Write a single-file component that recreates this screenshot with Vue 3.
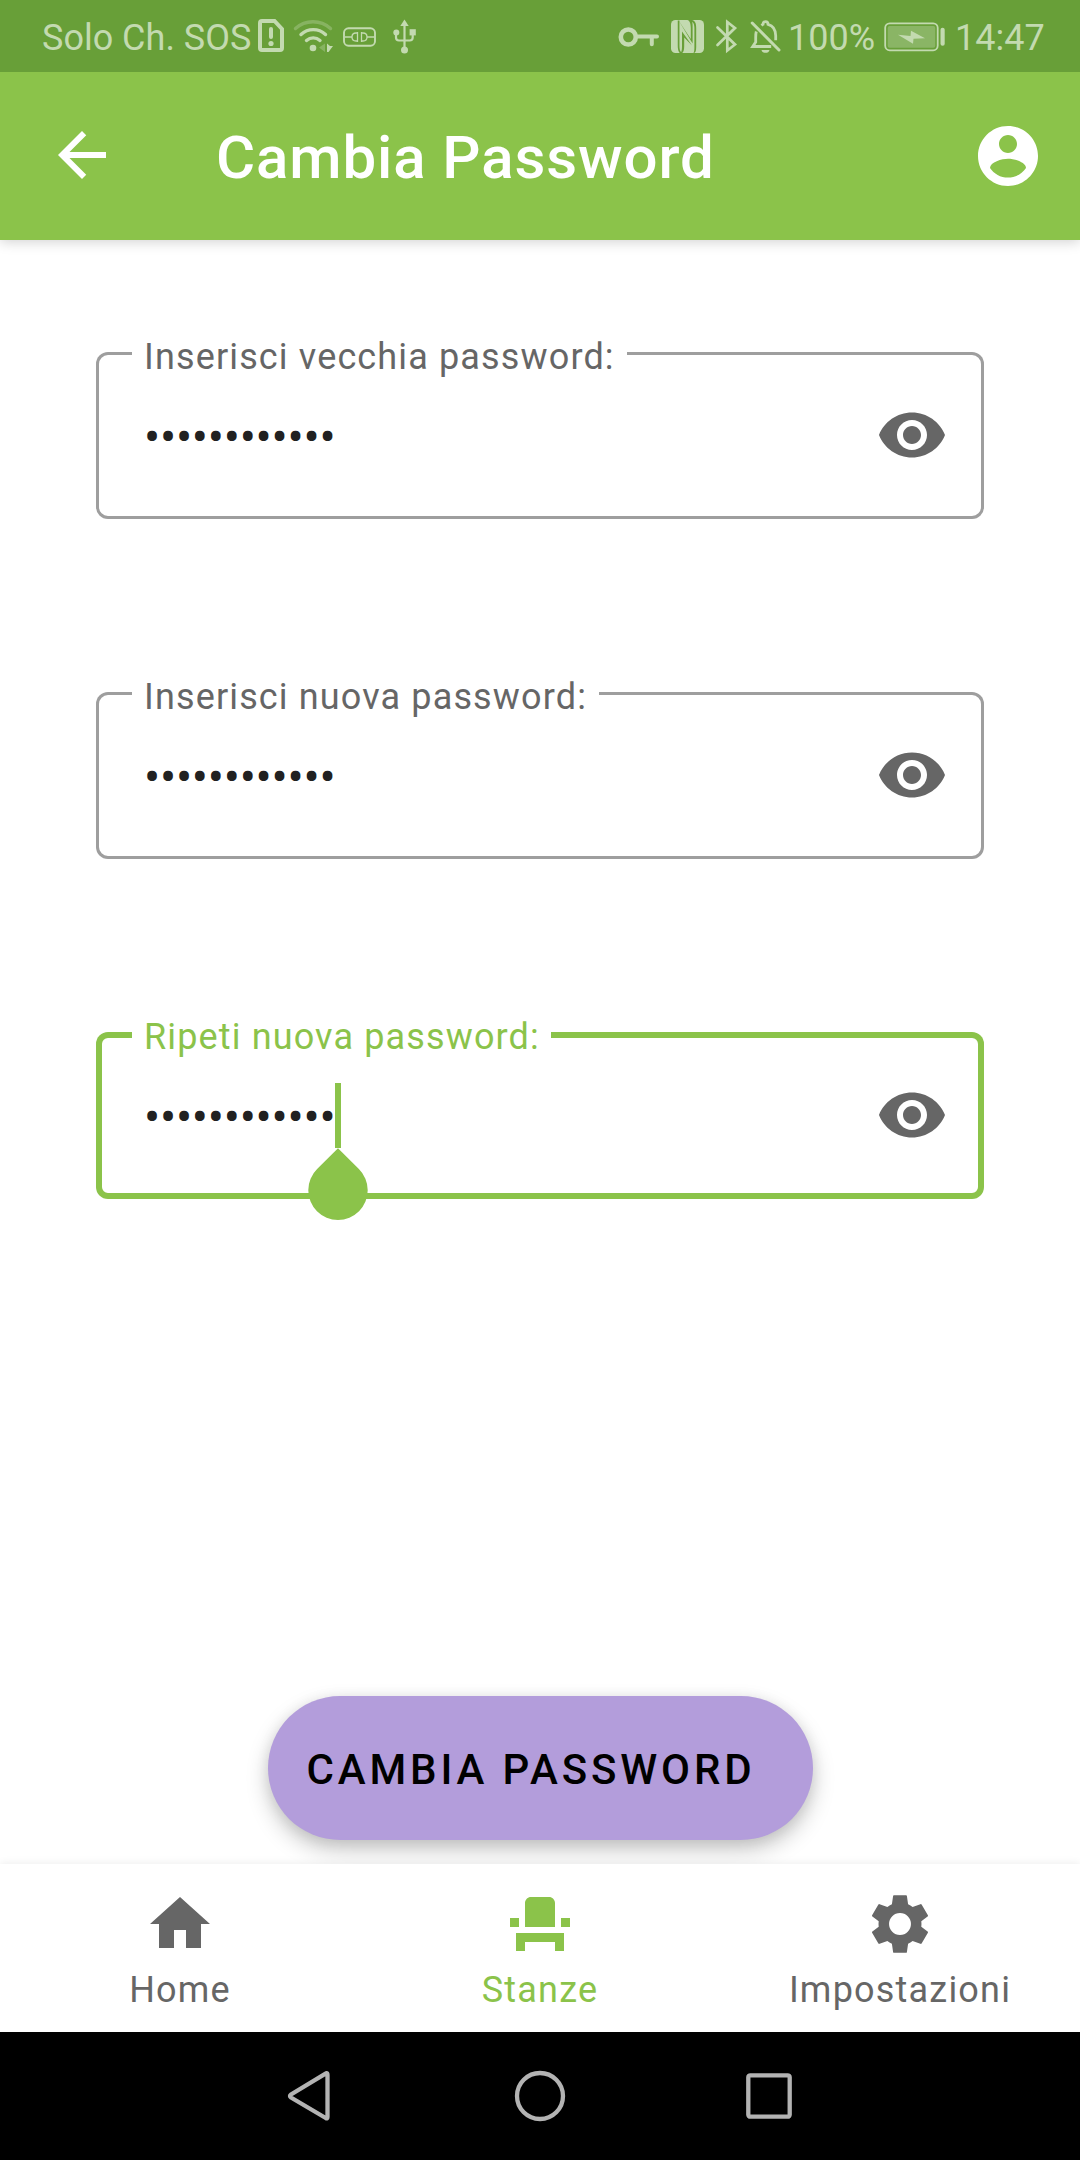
<script setup>
const fields = [
  { id: 'old', label: 'Inserisci vecchia password:', notch: 495, focused: false },
  { id: 'new', label: 'Inserisci nuova password:', notch: 467, focused: false },
  { id: 'repeat', label: 'Ripeti nuova password:', notch: 419, focused: true },
]
const dots = '•'.repeat(12)

const tabs = [
  { label: 'Home', active: false, path: 'M10 20v-6h4v6h5v-8h3L12 3 2 12h3v8z' },
  {
    label: 'Stanze',
    active: true,
    path: 'M4 18v3h3v-3h10v3h3v-6H4zM19 10h3v3h-3zM2 10h3v3H2zM17 13H7V5c0-1.1.9-2 2-2h6c1.1 0 2 .9 2 2v8z',
  },
  {
    label: 'Impostazioni',
    active: false,
    path: 'M19.1 12.9a7.1 7.1 0 0 0 0-1.8l2.1-1.600a.3.3 0 0 0 .1-.4l-2.100-3.600a.3.3 0 0 0-.4-.1l-2.600.9a7 7 0 0 0-1.500-.9l-.4-2.700a.3.3 0 0 0-.3-.3h-4a.3.3 0 0 0-.3.300l-.4 2.700a7 7 0 0 0-1.500.9l-2.600-.9a.3.3 0 0 0-.4.100L2.700 9.100a.3.3 0 0 0 .1.400l2.100 1.600a7.100 7.100 0 0 0 0 1.800l-2.100 1.600a.3.3 0 0 0-.1.400l2.100 3.600c.1.100.2.200.4.100l2.600-.9a7 7 0 0 0 1.500.9l.4 2.700c0 .2.100.3.300.3h4c.2 0 .3-.1.300-.3l.4-2.700a7 7 0 0 0 1.500-.9l2.600.9c.2.100.3 0 .4-.1l2.100-3.600a.3.3 0 0 0-.1-.4zM12 15.650a3.650 3.650 0 1 1 0-7.300 3.650 3.650 0 0 1 0 7.300z',
  },
]
</script>

<template>
  <div class="screen">
    <div class="status">
      <span class="carrier">Solo Ch. SOS</span>
      <svg class="sim" width="26" height="33" viewBox="258 19 26 33">
        <path d="M262 21h12.500l7.500 8v19a2 2 0 0 1-2 2h-18a2 2 0 0 1-2-2V23a2 2 0 0 1 2-2z" fill="none" stroke="currentColor" stroke-width="4" />
        <path d="M271 29v8" stroke="currentColor" stroke-width="4" stroke-linecap="round" />
        <circle cx="271" cy="43.500" r="2.600" fill="currentColor" />
      </svg>
      <svg class="wifi" width="41" height="34" viewBox="293 19 41 34" fill="none" stroke="currentColor" stroke-width="3.400" stroke-linecap="round">
        <path d="M295.500 28.500c10-9 25-9 35 0" opacity=".35" />
        <path d="M301 34.500c7-6.500 17.500-6.500 24.500 0" />
        <path d="M306.500 40.500c4-3.500 9.500-3.500 13.500 0" />
        <circle cx="313" cy="48" r="3.300" fill="currentColor" stroke="none" />
        <path d="M325 43.500v8.500l-6-4.500z" fill="currentColor" stroke="none" opacity=".35" />
        <path d="M327 43.500v8.500h1.500l4.500-6h-3z" fill="currentColor" stroke="none" />
      </svg>
      <svg class="link" width="33" height="20" viewBox="343 26.500 33 20" fill="none" stroke="currentColor">
        <rect x="344" y="27.800" width="31" height="17.400" rx="4.500" stroke-width="1.900" />
        <path d="M345 36.500h7M367 36.500h7.500" stroke-width="1.600" />
        <path d="M357.500 31.500v10M357.500 32.500h-1.500c-2.500 0-4 1.700-4 4s1.500 4 4 4h1.500M361.500 31.500v10M361.500 32.500h1.500c2.500 0 4 1.700 4 4s-1.500 4-4 4h-1.500" stroke-width="1.300" />
      </svg>
      <svg class="usb" width="24" height="35" viewBox="393 19 24 35">
        <path d="M404.500 25v24M396 32v5.500c0 2 1.500 3 3 3h10.700c1.800 0 3-1.200 3-3V32" fill="none" stroke="currentColor" stroke-width="2.200" />
        <path d="M404.500 19.500l4.200 6.500h-8.400z" fill="currentColor" />
        <circle cx="404.500" cy="50" r="3.500" fill="currentColor" />
        <circle cx="396.300" cy="32.500" r="3" fill="currentColor" />
        <path d="M409.600 29.200h6.200v6.200h-6.200z" fill="currentColor" />
      </svg>

      <svg class="key" width="42" height="20" viewBox="617.500 26.500 42 20" fill="none" stroke="currentColor">
        <circle cx="627.800" cy="36.500" r="7.500" stroke-width="4.600" />
        <path d="M636 36h20.500M651.300 36v7.800" stroke-width="4" stroke-linecap="round" />
      </svg>
      <svg class="nfc" width="33" height="33" viewBox="671 20 33 33">
        <rect x="671" y="20" width="33" height="33" rx="4.500" fill="currentColor" />
        <path d="M678.600 20.500L690.800 39V28c0-4.500-1.200-7.500-3.500-8h4.500c3.700.5 4.400 4 4.400 8v19c0 3.500-.6 5.500-2 6h-.7c.8-1.500.9-3.500.9-6V28c0-3-.8-5.500-2.300-6.300.6 1.700.5 4 .5 6.300v15.500z" fill="#689f38" />
        <path d="M678.600 20.500v25.500c0 3.500.6 6 2.500 7" fill="none" stroke="#689f38" stroke-width="1.700" />
        <path d="M682 31.500l10 14-7.800-8V46c0 3.500-.6 6-2 7h-1.500c1-1.500 1.300-3.500 1.300-7z" fill="#689f38" />
      </svg>
      <svg class="bt" width="23" height="35" viewBox="715 19 23 35" fill="none" stroke="currentColor" stroke-width="2.700" stroke-linecap="round" stroke-linejoin="miter">
        <path d="M717.500 27.500l17.500 17-7.700 6V22l7.700 6-17.500 17" />
      </svg>
      <svg class="bell" width="32" height="34" viewBox="750 20 32 34" fill="none" stroke="currentColor" stroke-width="3">
        <path d="M752.200 23l26.800 27" stroke-linecap="round" />
        <path d="M756.300 31.500c-.6 2-.6 4-.6 6v4.500l-3 4.500h18.500M761.500 25.500c.8-.7 1-1 1.500-1.200 0-3.500 5-3.500 5 0 5.500 1.500 7.700 6 7.700 11.500v4.500" stroke-width="2.800" />
        <path d="M761.500 50h8c-.5 3.800-7.500 3.800-8 0z" fill="currentColor" stroke="none" />
      </svg>
      <span class="percent">100%</span>
      <svg class="battery" width="61" height="30" viewBox="883.500 21.700 61 30">
        <rect x="884.700" y="23" width="52.500" height="27" rx="4.500" fill="none" stroke="currentColor" stroke-width="1.800" />
        <rect x="887.200" y="25.600" width="47.600" height="21.800" rx="2" fill="currentColor" opacity=".38" />
        <path d="M897.500 34.500l12.500 1.200.5-5.200L924.500 38l-11.500.5-.5 5z" fill="currentColor" />
        <rect x="940" y="27.500" width="4.200" height="18" rx="2" fill="currentColor" />
      </svg>
      <span class="time">14:47</span>
    </div>

    <header class="appbar">
      <svg class="back" width="72" height="72" viewBox="0 0 24 24" fill="#fff">
        <path d="M20 11H7.830l5.590-5.590L12 4l-8 8 8 8 1.410-1.410L7.830 13H20z" />
      </svg>
      <h1>Cambia Password</h1>
      <svg width="72" height="72" viewBox="0 0 24 24" fill="#fff">
        <path d="M12 2C6.480 2 2 6.480 2 12s4.480 10 10 10 10-4.480 10-10S17.520 2 12 2zm0 3c1.660 0 3 1.340 3 3s-1.340 3-3 3-3-1.340-3-3 1.340-3 3-3zm0 14.200c-2.500 0-4.710-1.280-6-3.220.03-1.990 4-3.080 6-3.080 1.990 0 5.970 1.090 6 3.080-1.290 1.940-3.500 3.220-6 3.220z" />
      </svg>
    </header>

    <main>
      <div class="fields">
        <div v-for="f in fields" :key="f.id" class="field" :class="{ focused: f.focused }">
          <label :style="{ width: f.notch + 'px' }">{{ f.label }}</label>
          <span class="value">{{ dots }}</span>
          <svg class="eye" width="72" height="72" viewBox="0 0 24 24">
            <path d="M12 4.500C7 4.500 2.730 7.610 1 12c1.730 4.390 6 7.500 11 7.500s9.270-3.110 11-7.500c-1.730-4.390-6-7.500-11-7.500zM12 17c-2.760 0-5-2.240-5-5s2.240-5 5-5 5 2.240 5 5-2.240 5-5 5zm0-8c-1.660 0-3 1.340-3 3s1.340 3 3 3 3-1.340 3-3-1.340-3-3-3z" />
          </svg>
          <svg v-if="f.focused" class="caret" width="60" height="138" viewBox="0 0 60 138">
            <path d="M27 0h6v65h-6zM30 65.200L50.900 86.100A29.700 29.700 0 1 1 9.100 86.100z" />
          </svg>
        </div>
      </div>
      <button class="submit">CAMBIA PASSWORD</button>
    </main>

    <nav class="tabs">
      <div v-for="t in tabs" :key="t.label" class="tab" :class="{ active: t.active }">
        <svg width="72" height="72" viewBox="0 0 24 24"><path :d="t.path" /></svg>
        <span>{{ t.label }}</span>
      </div>
    </nav>

    <div class="system">
      <svg width="44" height="52" viewBox="0 0 44 52"><path d="M39.500 3.200Q40.500 3.200 40.500 5v42q0 2-1.800 1L4 27.500q-2-1.500 0-3L38.500 3.700z" /></svg>
      <svg width="52" height="52" viewBox="0 0 52 52"><circle cx="26" cy="26" r="23" /></svg>
      <svg width="46" height="46" viewBox="0 0 46 46"><rect x="2.300" y="2.300" width="41.400" height="41.400" rx="2" /></svg>
    </div>
  </div>
</template>

<style>
body {
  margin: 0;
}
</style>

<style scoped>
.screen {
  width: 1080px;
  height: 2160px;
  display: flex;
  flex-direction: column;
  background: #fff;
  font-family: Roboto, "Liberation Sans", sans-serif;
  overflow: hidden;
}
svg {
  display: block;
  flex: none;
}
.status {
  flex: none;
  position: relative;
  z-index: 1;
  height: 72px;
  display: flex;
  align-items: flex-start;
  background: #689f38;
  color: #c3dab0;
  font-size: 36px;
  line-height: 44px;
  white-space: nowrap;
}
.status span {
  flex: none;
  margin-top: 16px;
}
.carrier { width: 216px; margin-left: 42px; }
.sim { margin-top: 19px; }
.wifi { margin: 19px 0 0 9px; }
.link { margin: 26.500px 0 0 9px; }
.usb { margin: 19px 0 0 17px; }
.key { margin: 26.500px 0 0 200.500px; }
.nfc { margin: 20px 0 0 11.500px; }
.bt { margin: 19px 0 0 11px; }
.bell { margin: 20px 0 0 12px; }
.percent { width: 95.500px; margin-left: 6px; }
.battery { margin-top: 21.700px; }
.time { margin-left: 10.500px; }
.appbar {
  flex: none;
  position: relative;
  height: 168px;
  box-sizing: border-box;
  display: flex;
  align-items: center;
  padding: 0 36px 0 46px;
  background: #8bc34a;
  box-shadow: 0 2px 12px rgba(0, 0, 0, 0.18);
}
.back {
  margin-bottom: 2px;
}
h1 {
  flex: 1;
  margin: 4px 0 0 98px;
  color: #fff;
  font-size: 60px;
  font-weight: 500;
  line-height: 70px;
  letter-spacing: 0.900px;
  white-space: nowrap;
}
main {
  flex: 1;
  display: flex;
  flex-direction: column;
  align-items: center;
  justify-content: space-between;
  padding: 112px 96px 24px;
}
.fields {
  width: 888px;
  display: flex;
  flex-direction: column;
  gap: 173px;
}
.field {
  position: relative;
  height: 167px;
  box-sizing: border-box;
  display: flex;
  align-items: center;
  justify-content: space-between;
  padding: 0 36px 0 48px;
  border-radius: 12px;
  box-shadow: inset 0 0 0 3px #9e9e9e;
  color: #666;
}
.field.focused {
  box-shadow: inset 0 0 0 6px #8bc34a;
}
label {
  position: absolute;
  left: 36px;
  top: -17px;
  box-sizing: border-box;
  height: 44px;
  padding-left: 12px;
  background: #fff;
  font-size: 36px;
  line-height: 44px;
  letter-spacing: 1.140px;
  white-space: nowrap;
}
.focused label {
  color: #8bc34a;
}
.value {
  margin-top: 4px;
  color: #212121;
  font-size: 48px;
  line-height: 56px;
  letter-spacing: -0.250px;
}
.eye {
  margin-bottom: 1px;
  fill: #666;
}
.caret {
  position: absolute;
  left: 212px;
  top: 51px;
  fill: #8bc34a;
}
.submit {
  width: 545px;
  height: 144px;
  padding: 4px 0 0 39px;
  border: 0;
  border-radius: 72px;
  background: #b39ddb;
  box-shadow: 0 10px 22px rgba(0, 0, 0, 0.22), 0 2px 14px rgba(0, 0, 0, 0.08);
  color: #000;
  font: 500 42px/50px Roboto, "Liberation Sans", sans-serif;
  letter-spacing: 3.850px;
  text-align: left;
  white-space: nowrap;
}
.tabs {
  flex: none;
  position: relative;
  height: 168px;
  display: flex;
  background: #fff;
  box-shadow: 0 -1px 8px rgba(0, 0, 0, 0.07);
}
.tab {
  flex: 1;
  display: flex;
  flex-direction: column;
  align-items: center;
  padding-top: 24px;
  color: #666;
  fill: #666;
  font-size: 36px;
  line-height: 44px;
  letter-spacing: 1.200px;
}
.tab span {
  margin-top: 8px;
}
.tab.active {
  color: #8bc34a;
  fill: #8bc34a;
}
.system {
  flex: none;
  position: relative;
  height: 128px;
  display: flex;
  align-items: center;
  background: #000;
  fill: none;
  stroke: #b3b3b3;
  stroke-width: 4.300px;
}
.system svg:nth-child(1) { margin-left: 287px; }
.system svg:nth-child(2) { margin-left: 183px; }
.system svg:nth-child(3) { margin-left: 180px; }
</style>
